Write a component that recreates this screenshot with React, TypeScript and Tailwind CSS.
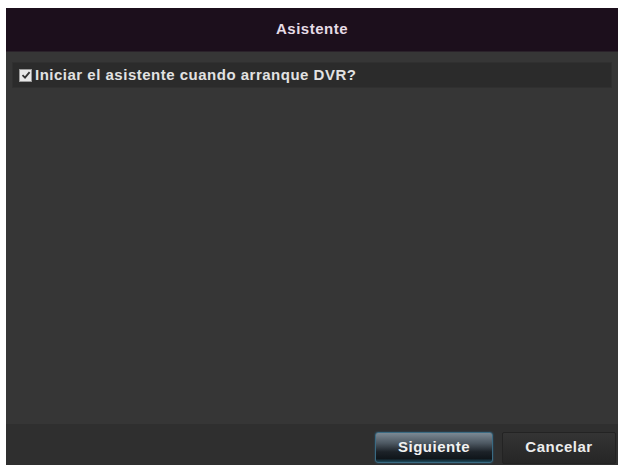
import React, { useState } from "react";

export default function App() {
  const [checked, setChecked] = useState(true);

  return (
    <div className="w-[618px] h-[465px] bg-white pl-[6px] pt-[8px] overflow-hidden [font-family:'Liberation_Sans',Arial,sans-serif]">
      <div className="flex flex-col h-[457px] bg-[#363636]">
        {/* title bar */}
        <div className="h-[44px] shrink-0 flex items-center justify-center bg-[#1c0f1c] border-b border-[#2a222a]">
          <span className="text-[15px] font-bold text-[#e6dbe6] tracking-[0.5px]">Asistente</span>
        </div>

        {/* body */}
        <div className="flex-1 px-[6px] pt-[10px]">
          <label className="flex items-center gap-[3px] h-[26px] pl-[6px] bg-[#2b2b2b] border border-[#303030] cursor-pointer">
            <span
              onClick={() => setChecked(!checked)}
              className="w-[13px] h-[13px] flex items-center justify-center bg-[#e8e8e8] border border-[#9a9a9a]"
            >
              {checked && (
                <svg width="10" height="10" viewBox="0 0 10 10">
                  <path d="M1.5 5.2 L4 7.6 L8.6 2.2" fill="none" stroke="#333" strokeWidth="1.8" />
                </svg>
              )}
            </span>
            <span className="text-[15px] font-bold text-[#e2e2e2] tracking-[0.5px]">
              Iniciar el asistente cuando arranque DVR?
            </span>
          </label>
        </div>

        {/* footer */}
        <div className="h-[41px] shrink-0 flex items-center justify-end gap-[9px] bg-[#2f2f2f] pr-[2px] pt-[6px]">
          <button className="w-[118px] h-[31px] rounded-[3px] border border-[#3a6a82] bg-[linear-gradient(#7b8994,#4d5862_35%,#1c2228_65%,#10161b_88%,#1d4a5c)] text-[15px] font-bold text-[#f2f2f2] tracking-[0.5px] shadow-[0_0_2px_#2d5a78]">
            Siguiente
          </button>
          <button className="w-[114px] h-[32px] rounded-[2px] border border-[#232323] bg-[linear-gradient(#343434,#262626)] text-[15px] font-bold text-[#ececec] tracking-[0.5px]">
            Cancelar
          </button>
        </div>
      </div>
    </div>
  );
}
